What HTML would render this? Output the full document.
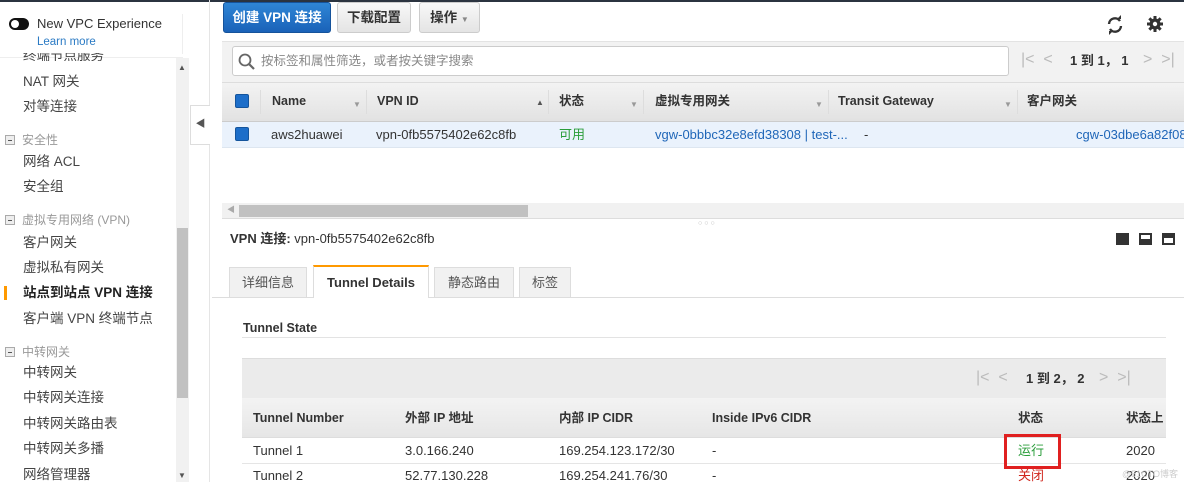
<!DOCTYPE html>
<html><head><meta charset="utf-8"><style>
*{box-sizing:border-box;margin:0;padding:0}
body{width:1184px;height:482px;overflow:hidden;background:#fff;font-family:"Liberation Sans","Noto Sans CJK SC",sans-serif;font-size:13px;line-height:16px;color:#333;position:relative}
.a{position:absolute;white-space:nowrap}
.nav{font-size:13.5px;color:#444;left:23px}
.grp{font-size:12px;color:#999;left:22px}
.mi{position:absolute;left:5px;width:10px;height:10px;border:1px solid #aaa;background:#eee}
.mi:after{content:"";position:absolute;left:2px;top:3.5px;width:4px;height:1px;background:#555}
.btn{position:absolute;top:2px;height:31px;border:1px solid #ccc;border-radius:3px;background:linear-gradient(#f8f8f8,#e4e4e4);font-weight:bold;font-size:13.5px;line-height:29px;text-align:center;color:#333}
.th{font-weight:bold;font-size:12.5px;color:#333}
.cb{position:absolute;width:14px;height:14px;background:#1d6ec9;border-radius:2px;border:1px solid #14549c}
.sep{position:absolute;width:1px;background:#ddd}
.tri{position:absolute;font-size:8px;color:#999}
</style></head><body>
<div class="a" style="left:0;top:0;width:1184px;height:2px;background:#2b3440"></div>
<!-- sidebar -->
<div class="a" style="left:182px;top:14px;width:1px;height:40px;background:#eee"></div>
<div class="a" style="left:9px;top:18px;width:20px;height:12px;border-radius:6px;background:#111"></div>
<div class="a" style="left:11px;top:20px;width:8px;height:8px;border-radius:4px;background:#fff"></div>
<div class="a" style="left:37px;top:16px;font-size:13px;color:#333">New VPC Experience</div>
<div class="a" style="left:37px;top:34px;font-size:11.5px;color:#2a7ac4">Learn more</div>
<div class="a" style="left:0;top:57px;width:183px;height:1px;background:#eee"></div>
<div class="a nav" style="top:53px;height:8px;overflow:hidden;line-height:6px">终端节点服务</div>
<div class="a nav" style="top:74px">NAT 网关</div>
<div class="a nav" style="top:99px">对等连接</div>
<div class="mi" style="top:135px"></div><div class="a grp" style="top:132px">安全性</div>
<div class="a nav" style="top:154px">网络 ACL</div>
<div class="a nav" style="top:179px">安全组</div>
<div class="mi" style="top:215px"></div><div class="a grp" style="top:212px">虚拟专用网络 (VPN)</div>
<div class="a nav" style="top:235px">客户网关</div>
<div class="a nav" style="top:260px">虚拟私有网关</div>
<div class="a" style="left:4px;top:286px;width:3px;height:14px;background:#f90"></div>
<div class="a nav" style="top:285px;font-weight:bold;color:#222">站点到站点 VPN 连接</div>
<div class="a nav" style="top:311px">客户端 VPN 终端节点</div>
<div class="mi" style="top:347px"></div><div class="a grp" style="top:344px">中转网关</div>
<div class="a nav" style="top:365px">中转网关</div>
<div class="a nav" style="top:390px">中转网关连接</div>
<div class="a nav" style="top:416px">中转网关路由表</div>
<div class="a nav" style="top:441px">中转网关多播</div>
<div class="a nav" style="top:467px">网络管理器</div>
<div class="a" style="left:176px;top:58px;width:13px;height:424px;background:#f1f1f1"></div>
<div class="a" style="left:177px;top:228px;width:11px;height:170px;background:#c1c1c1"></div>
<div class="a" style="left:178px;top:60px;font-size:8px;color:#555">▲</div>
<div class="a" style="left:178px;top:468px;font-size:8px;color:#555">▼</div>
<div class="a" style="left:209px;top:0;width:1px;height:482px;background:#e5e5e5"></div>
<div class="a" style="left:190px;top:105px;width:20px;height:40px;border:1px solid #ddd;border-right:none;background:#fff;font-size:10px;color:#555;line-height:38px;text-align:center">◀</div>
<!-- buttons -->
<div class="btn" style="left:223px;width:108px;background:linear-gradient(#2f86d6,#1a62b8);border-color:#15539b;color:#fff">创建 VPN 连接</div>
<div class="btn" style="left:337px;width:74px">下载配置</div>
<div class="btn" style="left:419px;width:61px">操作 <span style="font-size:8px;color:#888">▼</span></div>
<svg class="a" style="left:1105px;top:15px" width="20" height="20" viewBox="0 0 20 20"><path d="M4 9a6 6 0 0 1 11-3M16 11a6 6 0 0 1-11 3" stroke="#333" stroke-width="2.4" fill="none"/><path d="M12 4l4 0 0-4z M8 16l-4 0 0 4z" fill="#333"/></svg>
<svg class="a" style="left:1146px;top:15px" width="18" height="18" viewBox="0 0 18 18"><g fill="#333"><circle cx="9" cy="9" r="5.5"/><rect x="7.5" y="1" width="3" height="16"/><rect x="1" y="7.5" width="16" height="3"/><rect x="7.5" y="1" width="3" height="16" transform="rotate(45 9 9)"/><rect x="7.5" y="1" width="3" height="16" transform="rotate(-45 9 9)"/></g><circle cx="9" cy="9" r="2.2" fill="#fff"/></svg>
<!-- filter bar -->
<div class="a" style="left:222px;top:41px;width:962px;height:41px;background:#f2f2f2;border-top:1px solid #e3e3e3"></div>
<div class="a" style="left:232px;top:46px;width:777px;height:30px;background:#fff;border:1px solid #ccc;border-radius:3px"></div>
<svg class="a" style="left:238px;top:53px" width="18" height="18"><circle cx="7" cy="7" r="5.5" stroke="#666" stroke-width="1.8" fill="none"/><path d="M11 11l5 5" stroke="#666" stroke-width="2.2"/></svg>
<div class="a" style="left:261px;top:53px;color:#888;font-size:12.5px">按标签和属性筛选，或者按关键字搜索</div>
<div class="a" style="left:1021px;top:52px;color:#bbb;font-size:16px">|&lt;&nbsp;&nbsp;&lt;</div>
<div class="a" style="left:1070px;top:53px;font-weight:bold;font-size:13px;color:#333">1 到 1， 1</div>
<div class="a" style="left:1143px;top:52px;color:#bbb;font-size:16px">&gt;&nbsp;&nbsp;&gt;|</div>
<!-- table header -->
<div class="a" style="left:222px;top:82px;width:962px;height:40px;background:linear-gradient(#f3f3f3,#e2e2e2);border-top:1px solid #ddd;border-bottom:1px solid #ccc"></div>
<div class="cb" style="left:235px;top:94px"></div>
<div class="sep" style="left:260px;top:90px;height:24px"></div>
<div class="a th" style="left:272px;top:93px">Name</div><div class="tri" style="left:353px;top:97px">▼</div>
<div class="sep" style="left:366px;top:90px;height:24px"></div>
<div class="a th" style="left:377px;top:93px">VPN ID</div><div class="tri" style="left:536px;top:95px;color:#555">▲</div>
<div class="sep" style="left:548px;top:90px;height:24px"></div>
<div class="a th" style="left:559px;top:93px">状态</div><div class="tri" style="left:630px;top:97px">▼</div>
<div class="sep" style="left:643px;top:90px;height:24px"></div>
<div class="a th" style="left:655px;top:93px">虚拟专用网关</div><div class="tri" style="left:815px;top:97px">▼</div>
<div class="sep" style="left:828px;top:90px;height:24px"></div>
<div class="a th" style="left:838px;top:93px">Transit Gateway</div><div class="tri" style="left:1004px;top:97px">▼</div>
<div class="sep" style="left:1017px;top:90px;height:24px"></div>
<div class="a th" style="left:1027px;top:93px">客户网关</div>
<!-- row -->
<div class="a" style="left:222px;top:122px;width:962px;height:26px;background:#eaf2fc;border-bottom:1px solid #dde6f0"></div>
<div class="cb" style="left:235px;top:127px"></div>
<div class="a" style="left:271px;top:127px">aws2huawei</div>
<div class="a" style="left:376px;top:127px">vpn-0fb5575402e62c8fb</div>
<div class="a" style="left:559px;top:127px;color:#2a9d3a">可用</div>
<div class="a" style="left:655px;top:127px;color:#1f66b8">vgw-0bbbc32e8efd38308 | test-...</div>
<div class="a" style="left:864px;top:127px">-</div>
<div class="a" style="left:1076px;top:127px;color:#1f66b8">cgw-03dbe6a82f087</div>
<!-- h scrollbar -->
<div class="a" style="left:222px;top:203px;width:962px;height:16px;background:#f1f1f1;border-bottom:1px solid #ddd"></div>
<div class="a" style="left:239px;top:205px;width:289px;height:12px;background:#c1c1c1"></div>
<div class="a" style="left:227px;top:205px;font-size:8px;color:#aaa;line-height:10px">◀</div>
<div class="a" style="left:698px;top:220px;font-size:7px;color:#bbb;letter-spacing:2px;line-height:8px">○○○</div>
<!-- details -->
<div class="a" style="left:230px;top:231px;font-size:13px"><b>VPN 连接:</b> vpn-0fb5575402e62c8fb</div>
<div class="a" style="left:1116px;top:233px;width:13px;height:12px;background:#333"></div>
<div class="a" style="left:1139px;top:233px;width:13px;height:12px;border:2px solid #333;border-bottom-width:6px"></div>
<div class="a" style="left:1162px;top:233px;width:13px;height:12px;border:2px solid #333;border-top-width:5px"></div>
<div class="a" style="left:212px;top:297px;width:972px;height:1px;background:#ddd"></div>
<div class="a" style="left:229px;top:267px;width:78px;height:31px;background:#f1f1f1;border:1px solid #ddd;text-align:center;line-height:29px;color:#555">详细信息</div>
<div class="a" style="left:313px;top:265px;width:116px;height:33px;background:#fff;border:1px solid #ddd;border-top:2px solid #f90;border-bottom:none;text-align:center;line-height:31px;font-weight:bold">Tunnel Details</div>
<div class="a" style="left:434px;top:267px;width:80px;height:31px;background:#f1f1f1;border:1px solid #ddd;text-align:center;line-height:29px;color:#555">静态路由</div>
<div class="a" style="left:519px;top:267px;width:52px;height:31px;background:#f1f1f1;border:1px solid #ddd;text-align:center;line-height:29px;color:#555">标签</div>
<div class="a" style="left:243px;top:320px;font-weight:bold;font-size:12.5px">Tunnel State</div>
<div class="a" style="left:242px;top:337px;width:924px;height:1px;background:#e3e3e3"></div>
<div class="a" style="left:242px;top:358px;width:924px;height:40px;background:#ebebeb;border-top:1px solid #ddd"></div>
<div class="a" style="left:976px;top:370px;color:#bbb;font-size:16px">|&lt;&nbsp;&nbsp;&lt;</div>
<div class="a" style="left:1026px;top:371px;font-weight:bold;font-size:13px">1 到 2， 2</div>
<div class="a" style="left:1099px;top:370px;color:#bbb;font-size:16px">&gt;&nbsp;&nbsp;&gt;|</div>
<div class="a" style="left:242px;top:398px;width:924px;height:40px;background:linear-gradient(#f3f3f3,#e6e6e6);border-bottom:1px solid #ddd"></div>
<div class="a th" style="left:253px;top:410px">Tunnel Number</div>
<div class="a th" style="left:405px;top:410px">外部 IP 地址</div>
<div class="a th" style="left:559px;top:410px">内部 IP CIDR</div>
<div class="a th" style="left:712px;top:410px">Inside IPv6 CIDR</div>
<div class="a th" style="left:1018px;top:410px">状态</div>
<div class="a th" style="left:1126px;top:410px">状态上</div>
<div class="a" style="left:253px;top:443px">Tunnel 1</div>
<div class="a" style="left:405px;top:443px">3.0.166.240</div>
<div class="a" style="left:559px;top:443px">169.254.123.172/30</div>
<div class="a" style="left:712px;top:443px">-</div>
<div class="a" style="left:1018px;top:443px;color:#2a9d3a">运行</div>
<div class="a" style="left:1126px;top:443px">2020</div>
<div class="a" style="left:242px;top:463px;width:924px;height:1px;background:#e5e5e5"></div>
<div class="a" style="left:253px;top:468px">Tunnel 2</div>
<div class="a" style="left:405px;top:468px">52.77.130.228</div>
<div class="a" style="left:559px;top:468px">169.254.241.76/30</div>
<div class="a" style="left:712px;top:468px">-</div>
<div class="a" style="left:1018px;top:468px;color:#d0271d">关闭</div>
<div class="a" style="left:1126px;top:468px">2020</div>
<div class="a" style="left:1004px;top:434px;width:57px;height:35px;border:3px solid #e02020"></div>
<div class="a" style="left:1122px;top:466px;font-size:9px;color:#ccc">@51CTO博客</div>
</body></html>
